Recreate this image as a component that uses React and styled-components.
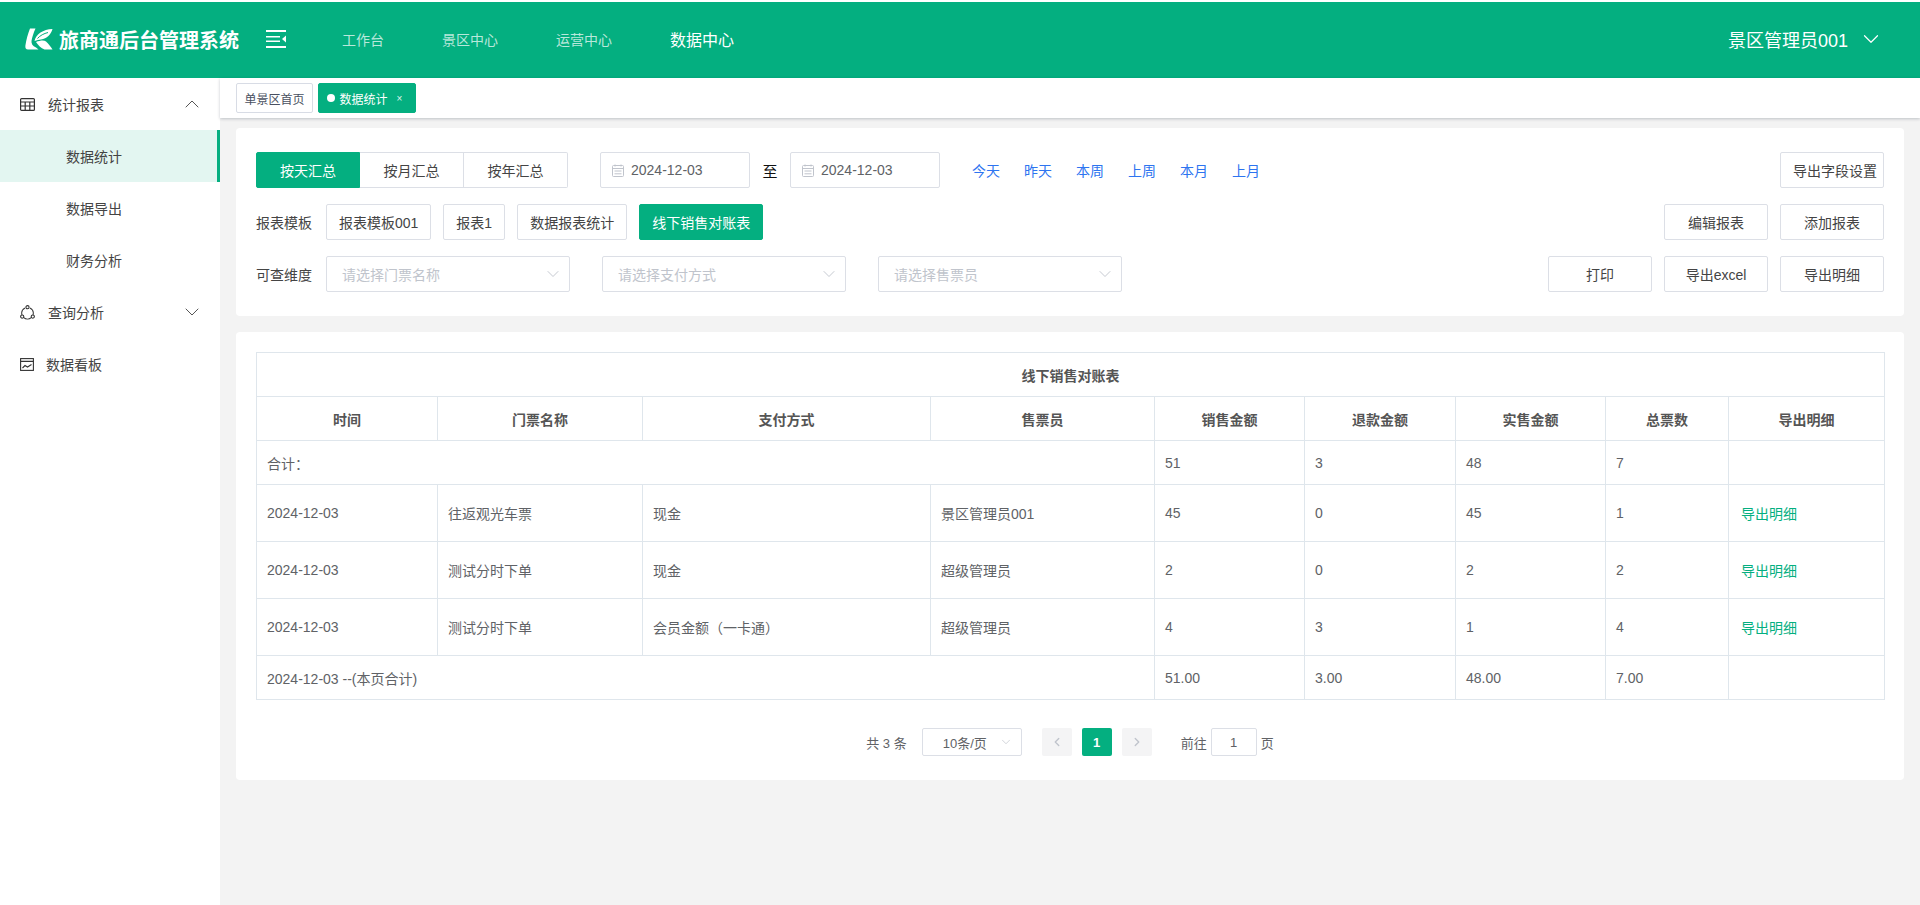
import styled, { createGlobalStyle } from "styled-components";
import { ChevronDown, ChevronUp, ChevronLeft, ChevronRight } from "lucide-react";

const GREEN = "#04af80";
const FONT = `"Liberation Sans", "Noto Sans CJK SC", sans-serif`;

const GlobalStyle = createGlobalStyle`
  html, body {
    margin: 0;
    padding: 0;
    height: 100%;
    overflow: hidden;
    background: #f3f3f3;
    font-family: ${FONT};
  }
  * {
    box-sizing: border-box;
  }
`;

const Page = styled.div`
  display: flex;
  flex-direction: column;
  width: 1920px;
  height: 905px;
  padding-top: 2px;
  background: #fff;
`;

const Header = styled.header`
  display: flex;
  align-items: center;
  flex: none;
  height: 76px;
  padding: 0 36px 2px 25px;
  background: ${GREEN};
  color: #fff;
`;

const Brand = styled.div`
  display: flex;
  align-items: center;
  gap: 6px;
  width: 241px;
  font-size: 20px;
  font-weight: 700;
`;

const Nav = styled.nav`
  display: flex;
  align-items: center;
  gap: 58px;
  margin-left: 56px;
`;

const NavItem = styled.span`
  font-size: ${(p) => (p.$active ? "16px" : "14px")};
  color: ${(p) => (p.$active ? "#fff" : "rgba(255, 255, 255, 0.72)")};
`;

const User = styled.div`
  display: flex;
  align-items: center;
  gap: 10px;
  margin-left: auto;
  font-size: 18px;
`;

const Body = styled.div`
  display: flex;
  flex: 1;
  min-height: 0;
`;

const Sidebar = styled.aside`
  flex: none;
  width: 220px;
  background: #fff;
  color: #444;
  font-size: 14px;
`;

const MenuRow = styled.div`
  display: flex;
  align-items: center;
  height: 52px;
  padding: 0 20px;
  gap: ${(p) => p.$gap || 13}px;
`;

const MenuArrow = styled.span`
  display: flex;
  margin-left: auto;
  margin-right: -4px;
  color: #555;
`;

const SubItem = styled.div`
  display: flex;
  align-items: center;
  height: 52px;
  padding-left: 66px;
  background: ${(p) => (p.$active ? "#e3f6f1" : "transparent")};
  border-right: 3px solid ${(p) => (p.$active ? GREEN : "transparent")};
`;

const Main = styled.main`
  flex: 1;
  min-width: 0;
  background: #f3f3f3;
`;

const TabBar = styled.div`
  display: flex;
  align-items: center;
  gap: 5px;
  height: 40px;
  padding: 0 16px;
  background: #fff;
  box-shadow: 0 1px 3px rgba(0, 21, 41, 0.22);
`;

const Tab = styled.div`
  display: flex;
  align-items: center;
  height: 30px;
  padding: 0 7.5px;
  border: 1px solid ${(p) => (p.$active ? GREEN : "#d8dce5")};
  border-radius: 2px;
  background: ${(p) => (p.$active ? GREEN : "#fff")};
  color: ${(p) => (p.$active ? "#fff" : "#495060")};
  font-size: 12px;
`;

const TabDot = styled.i`
  width: 8px;
  height: 8px;
  margin-right: 5px;
  border-radius: 50%;
  background: #fff;
`;

const TabClose = styled.span`
  margin: 0 5px 0 9px;
  font-size: 10px;
  opacity: 0.85;
`;

const Content = styled.div`
  display: flex;
  flex-direction: column;
  gap: 16px;
  padding: 10px 16px 0;
`;

const Card = styled.section`
  padding: ${(p) => p.$padding};
  background: #fff;
  border-radius: 4px;
`;

const FilterRows = styled.div`
  display: flex;
  flex-direction: column;
  gap: 16px;
`;

const FilterRow = styled.div`
  display: flex;
  align-items: center;
  height: 36px;
`;

const Segments = styled.div`
  display: flex;
  margin-right: 32px;
`;

const Segment = styled.div`
  display: flex;
  align-items: center;
  justify-content: center;
  width: 104px;
  height: 36px;
  border: 1px solid ${(p) => (p.$active ? GREEN : "#dcdfe6")};
  border-left-width: 0;
  background: ${(p) => (p.$active ? GREEN : "#fff")};
  color: ${(p) => (p.$active ? "#fff" : "#444")};
  font-size: 14px;

  &:first-child {
    border-left-width: 1px;
    border-radius: 2px 0 0 2px;
  }
  &:last-child {
    border-radius: 0 2px 2px 0;
  }
`;

const DateBox = styled.div`
  display: flex;
  align-items: center;
  gap: 7px;
  width: 150px;
  height: 36px;
  padding-left: 11px;
  border: 1px solid #dcdfe6;
  border-radius: 2px;
  color: #606266;
  font-size: 14px;
`;

const DateSep = styled.span`
  width: 40px;
  color: #111;
  font-size: 15px;
  text-align: center;
`;

const QuickLinks = styled.div`
  display: flex;
  gap: 24px;
  margin-left: 32px;
  color: #2d74f0;
  font-size: 14px;
`;

const RowActions = styled.div`
  display: flex;
  gap: 12px;
  margin-left: auto;
`;

const FieldLabel = styled.span`
  width: 70px;
  color: #444;
  font-size: 14px;
`;

const Templates = styled.div`
  display: flex;
  gap: 12px;
`;

const Button = styled.button`
  flex: none;
  width: ${(p) => (p.$fit ? "auto" : "104px")};
  height: 36px;
  padding: 0 12px;
  border: 1px solid ${(p) => (p.$active ? GREEN : "#dcdfe6")};
  border-radius: 2px;
  background: ${(p) => (p.$active ? GREEN : "#fff")};
  color: ${(p) => (p.$active ? "#fff" : "#444")};
  font-family: ${FONT};
  font-size: 14px;
  white-space: nowrap;
`;

const Selects = styled.div`
  display: flex;
  gap: 32px;
`;

const SelectBox = styled.div`
  display: flex;
  align-items: center;
  justify-content: space-between;
  width: 244px;
  height: 36px;
  padding: 0 6px 0 15px;
  border: 1px solid #dcdfe6;
  border-radius: 2px;
  color: #c0c4cc;
  font-size: 14px;
`;

const Table = styled.table`
  width: 1628px;
  border-collapse: collapse;
  table-layout: fixed;
  color: #606266;
  font-size: 14px;
`;

const Th = styled.th`
  height: 44px;
  padding: 0 10px;
  border: 1px solid #dfe6ec;
  color: #555;
  font-weight: 700;
  text-align: center;
`;

const Td = styled.td`
  height: ${(p) => (p.$tall ? 57 : 44)}px;
  padding: 0 10px;
  border: 1px solid #dfe6ec;
`;

const ExportLink = styled.span`
  margin-left: 2px;
  color: ${GREEN};
`;

const Pager = styled.div`
  display: flex;
  align-items: center;
  justify-content: center;
  height: 28px;
  margin-top: 28px;
  color: #606266;
  font-size: 13px;
`;

const PageSize = styled.div`
  display: flex;
  align-items: center;
  justify-content: space-between;
  width: 100px;
  height: 28px;
  margin: 0 20px 0 15px;
  padding: 0 8px 0 20px;
  border: 1px solid #dcdfe6;
  border-radius: 2px;
`;

const PageBtn = styled.div`
  display: flex;
  align-items: center;
  justify-content: center;
  width: 30px;
  height: 28px;
  margin-right: 10px;
  border-radius: 2px;
  background: ${(p) => (p.$active ? GREEN : "#f4f4f5")};
  color: ${(p) => (p.$active ? "#fff" : "#c0c4cc")};
  font-weight: 700;
`;

const Jumper = styled.div`
  display: flex;
  align-items: center;
  margin-left: 19px;
  gap: 4px;
`;

const JumpInput = styled.div`
  display: flex;
  align-items: center;
  justify-content: center;
  width: 46px;
  height: 28px;
  border: 1px solid #dcdfe6;
  border-radius: 2px;
`;

const LogoIcon = () => (
  <svg width="28" height="22" viewBox="0 0 28 22" fill="#fff">
    <path d="M5 0.5 H10.5 C8.5 5 7 9.5 6.5 13 C6.2 15.5 7.5 18 11 19.5 L13.5 21.5 H3 C1 21.5 0 20 0.4 17.5 C1.2 12 3 5.5 5 0.5 Z" />
    <path d="M9.5 13 C11 6 18 1.5 27.5 1 C26 6.5 22 10.5 16 11.5 C14 11.8 12 12.3 9.5 13 Z" />
    <path d="M12.5 10.5 C15 7.5 19 5.5 23 4.5" fill="none" stroke={GREEN} strokeWidth="1" />
    <path d="M11 14 C15 12.5 19 12 21 13.5 C23.5 15.5 25.5 18.5 27.5 21.5 H19.5 C16 20.5 13 17 11 14 Z" />
  </svg>
);

const FoldIcon = () => (
  <svg width="20" height="18" viewBox="0 0 20 18" fill="#fff">
    <rect x="0" y="0" width="20" height="2" />
    <rect x="0" y="6" width="14" height="1.5" />
    <rect x="0" y="10.5" width="14" height="1.5" />
    <rect x="0" y="16" width="20" height="2" />
    <path d="M20 5.5 V12.5 L16 9 Z" />
  </svg>
);

const TableIcon = () => (
  <svg width="15" height="13" viewBox="0 0 15 13" fill="none" stroke="#333" strokeWidth="1.2">
    <rect x="0.6" y="0.6" width="13.8" height="11.8" rx="1" />
    <path d="M0.6 4 H14.4 M0.6 8 H14.4 M5.2 4 V12.4 M9.8 4 V12.4" />
  </svg>
);

const QueryIcon = () => (
  <svg width="15" height="15" viewBox="0 0 15 15" fill="none" stroke="#333" strokeWidth="1.1">
    <path d="M5 3 A5.6 5.6 0 0 0 2 9.8 M10 3 A5.6 5.6 0 0 1 13 9.8 M3.8 12.6 A5.6 5.6 0 0 0 11.2 12.6" />
    <circle cx="7.5" cy="2.2" r="1.6" />
    <circle cx="2.2" cy="11.6" r="1.6" />
    <circle cx="12.8" cy="11.6" r="1.6" />
  </svg>
);

const BoardIcon = () => (
  <svg width="14" height="13" viewBox="0 0 14 13" fill="none" stroke="#333" strokeWidth="1.1">
    <rect x="0.6" y="0.6" width="12.8" height="11.8" />
    <path d="M0.6 3.4 H13.4 M2.5 10 L5 7.5 L7.5 9 L11.5 6.5" />
  </svg>
);

const CalendarIcon = () => (
  <svg width="12" height="13" viewBox="0 0 12 13" fill="none" stroke="#c0c4cc" strokeWidth="1">
    <rect x="0.5" y="1.5" width="11" height="11" rx="1" />
    <path d="M0.5 4.5 H11.5 M3 0.5 V2.5 M9 0.5 V2.5 M2.5 7 H9.5 M2.5 9.8 H9.5" />
  </svg>
);

const templates = [
  { name: "报表模板001" },
  { name: "报表1" },
  { name: "数据报表统计" },
  { name: "线下销售对账表", active: true },
];

const columns = [
  { title: "时间", width: 181 },
  { title: "门票名称", width: 205 },
  { title: "支付方式", width: 288 },
  { title: "售票员", width: 224 },
  { title: "销售金额", width: 150 },
  { title: "退款金额", width: 151 },
  { title: "实售金额", width: 150 },
  { title: "总票数", width: 123 },
  { title: "导出明细", width: 156 },
];

const rows = [
  ["2024-12-03", "往返观光车票", "现金", "景区管理员001", "45", "0", "45", "1"],
  ["2024-12-03", "测试分时下单", "现金", "超级管理员", "2", "0", "2", "2"],
  ["2024-12-03", "测试分时下单", "会员金额（一卡通）", "超级管理员", "4", "3", "1", "4"],
];

export default function App() {
  return (
    <>
      <GlobalStyle />
      <Page>
        <Header>
          <Brand>
            <LogoIcon />
            旅商通后台管理系统
          </Brand>
          <FoldIcon />
          <Nav>
            <NavItem>工作台</NavItem>
            <NavItem>景区中心</NavItem>
            <NavItem>运营中心</NavItem>
            <NavItem $active>数据中心</NavItem>
          </Nav>
          <User>
            景区管理员001
            <ChevronDown size={26} strokeWidth={1.1} />
          </User>
        </Header>
        <Body>
          <Sidebar>
            <MenuRow>
              <TableIcon />
              统计报表
              <MenuArrow>
                <ChevronUp size={24} strokeWidth={1} />
              </MenuArrow>
            </MenuRow>
            <SubItem $active>数据统计</SubItem>
            <SubItem>数据导出</SubItem>
            <SubItem>财务分析</SubItem>
            <MenuRow>
              <QueryIcon />
              查询分析
              <MenuArrow>
                <ChevronDown size={24} strokeWidth={1} />
              </MenuArrow>
            </MenuRow>
            <MenuRow $gap={12}>
              <BoardIcon />
              数据看板
            </MenuRow>
          </Sidebar>
          <Main>
            <TabBar>
              <Tab>单景区首页</Tab>
              <Tab $active>
                <TabDot />
                数据统计
                <TabClose>×</TabClose>
              </Tab>
            </TabBar>
            <Content>
              <Card $padding="24px 20px">
                <FilterRows>
                  <FilterRow>
                    <Segments>
                      <Segment $active>按天汇总</Segment>
                      <Segment>按月汇总</Segment>
                      <Segment>按年汇总</Segment>
                    </Segments>
                    <DateBox>
                      <CalendarIcon />
                      2024-12-03
                    </DateBox>
                    <DateSep>至</DateSep>
                    <DateBox>
                      <CalendarIcon />
                      2024-12-03
                    </DateBox>
                    <QuickLinks>
                      <span>今天</span>
                      <span>昨天</span>
                      <span>本周</span>
                      <span>上周</span>
                      <span>本月</span>
                      <span>上月</span>
                    </QuickLinks>
                    <RowActions>
                      <Button>导出字段设置</Button>
                    </RowActions>
                  </FilterRow>
                  <FilterRow>
                    <FieldLabel>报表模板</FieldLabel>
                    <Templates>
                      {templates.map((t) => (
                        <Button key={t.name} $fit $active={t.active}>
                          {t.name}
                        </Button>
                      ))}
                    </Templates>
                    <RowActions>
                      <Button>编辑报表</Button>
                      <Button>添加报表</Button>
                    </RowActions>
                  </FilterRow>
                  <FilterRow>
                    <FieldLabel>可查维度</FieldLabel>
                    <Selects>
                      <SelectBox>
                        请选择门票名称
                        <ChevronDown size={20} strokeWidth={1.1} />
                      </SelectBox>
                      <SelectBox>
                        请选择支付方式
                        <ChevronDown size={20} strokeWidth={1.1} />
                      </SelectBox>
                      <SelectBox>
                        请选择售票员
                        <ChevronDown size={20} strokeWidth={1.1} />
                      </SelectBox>
                    </Selects>
                    <RowActions>
                      <Button>打印</Button>
                      <Button>导出excel</Button>
                      <Button>导出明细</Button>
                    </RowActions>
                  </FilterRow>
                </FilterRows>
              </Card>
              <Card $padding="20px 20px 24px">
                <Table>
                  <colgroup>
                    {columns.map((c) => (
                      <col key={c.title} width={c.width} />
                    ))}
                  </colgroup>
                  <thead>
                    <tr>
                      <Th colSpan={9}>线下销售对账表</Th>
                    </tr>
                    <tr>
                      {columns.map((c) => (
                        <Th key={c.title}>{c.title}</Th>
                      ))}
                    </tr>
                  </thead>
                  <tbody>
                    <tr>
                      <Td colSpan={4}>合计：</Td>
                      <Td>51</Td>
                      <Td>3</Td>
                      <Td>48</Td>
                      <Td>7</Td>
                      <Td />
                    </tr>
                    {rows.map((row, i) => (
                      <tr key={i}>
                        {row.map((v, j) => (
                          <Td key={j} $tall>
                            {v}
                          </Td>
                        ))}
                        <Td $tall>
                          <ExportLink>导出明细</ExportLink>
                        </Td>
                      </tr>
                    ))}
                    <tr>
                      <Td colSpan={4}>2024-12-03 --(本页合计)</Td>
                      <Td>51.00</Td>
                      <Td>3.00</Td>
                      <Td>48.00</Td>
                      <Td>7.00</Td>
                      <Td />
                    </tr>
                  </tbody>
                </Table>
                <Pager>
                  共 3 条
                  <PageSize>
                    10条/页
                    <ChevronDown size={14} strokeWidth={1.2} color="#c0c4cc" />
                  </PageSize>
                  <PageBtn>
                    <ChevronLeft size={14} strokeWidth={2.4} />
                  </PageBtn>
                  <PageBtn $active>1</PageBtn>
                  <PageBtn>
                    <ChevronRight size={14} strokeWidth={2.4} />
                  </PageBtn>
                  <Jumper>
                    前往
                    <JumpInput>1</JumpInput>页
                  </Jumper>
                </Pager>
              </Card>
            </Content>
          </Main>
        </Body>
      </Page>
    </>
  );
}
